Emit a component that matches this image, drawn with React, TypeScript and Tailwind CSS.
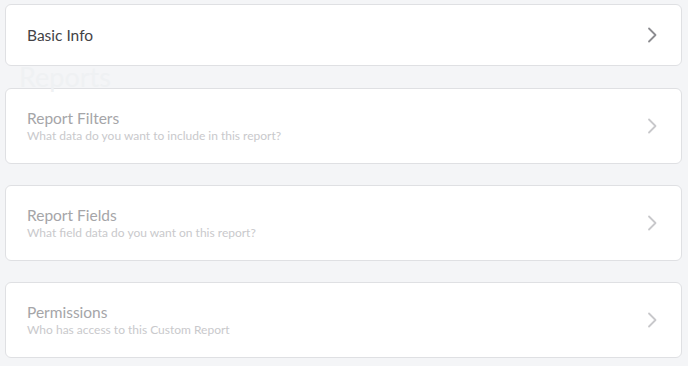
import React from "react";

function Chevron({ color }: { color: string }) {
  return (
    <svg width="10" height="16" viewBox="0 0 10 16" fill="none" className="shrink-0">
      <path d="M2 1.5 L8.5 8 L2 14.5" stroke={color} strokeWidth="1.8" strokeLinecap="round" strokeLinejoin="round" />
    </svg>
  );
}

function Card({ title, subtitle, active }: { title: string; subtitle?: string; active?: boolean }) {
  return (
    <div
      className={
        "flex items-center justify-between rounded-[6px] border border-[#dfe0e3] bg-white pl-[21px] pr-[24px] " +
        (active ? "h-[62px]" : "h-[76px]")
      }
    >
      <div className="flex flex-col">
        <div className={"text-[15.5px] leading-[18px] " + (active ? "text-[#434346]" : "text-[#a5a5a8]")}>{title}</div>
        {subtitle && <div className="text-[12px] leading-[15px] text-[#c9c9cc] mt-[1px]">{subtitle}</div>}
      </div>
      <Chevron color={active ? "#8c8c90" : "#c8c8cb"} />
    </div>
  );
}

export default function App() {
  return (
    <div
      className="w-[688px] h-[366px] bg-[#f4f5f7] pt-[4px] pl-[5px] pr-[6px] overflow-hidden"
      style={{ fontFamily: 'Lato, "Liberation Sans", sans-serif' }}
    >
      <Card title="Basic Info" active />
      <div className="h-[22px] pl-[14px] text-[27px] leading-[22px] text-[#eff1f3]">Reports</div>
      <Card title="Report Filters" subtitle="What data do you want to include in this report?" />
      <div className="h-[21px]" />
      <Card title="Report Fields" subtitle="What field data do you want on this report?" />
      <div className="h-[21px]" />
      <Card title="Permissions" subtitle="Who has access to this Custom Report" />
    </div>
  );
}
